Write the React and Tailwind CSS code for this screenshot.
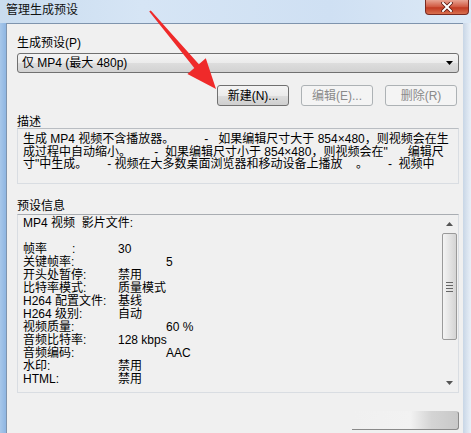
import React from 'react';

const font = { fontFamily: '"Liberation Sans", "Noto Sans CJK SC", sans-serif' };

const infoRows = [
  { label: '关键帧率:', value: '5', indent: true },
  { label: '开头处暂停:', value: '禁用' },
  { label: '比特率模式:', value: '质量模式' },
  { label: 'H264 配置文件:', value: '基线' },
  { label: 'H264 级别:', value: '自动' },
  { label: '视频质量:', value: '60 %', indent: true },
  { label: '音频比特率:', value: '128 kbps' },
  { label: '音频编码:', value: 'AAC', indent: true },
  { label: '水印:', value: '禁用' },
  { label: 'HTML:', value: '禁用' },
];

const Button = ({ children, disabled }) => (
  <div
    className={
      'w-[72px] h-[21px] rounded-[3px] border flex items-center justify-center text-[12px] ' +
      (disabled
        ? 'border-[#adb2b5] bg-[#f4f4f4] text-[#8a8a8a]'
        : 'border-[#707070] bg-[linear-gradient(#f4f4f4,#ebebeb_50%,#dddddd_51%,#cfcfcf)] text-black')
    }
  >
    {children}
  </div>
);

const Arrow = () => (
  <svg className="absolute left-0 top-0 pointer-events-none" width="471" height="433">
    <polygon
      points="150.8,10.4 198.9,64.2 205.8,58.3 216,89 187.4,73.9 194.3,68 149.2,11.6"
      fill="#ef2a2a"
    />
  </svg>
);

export default function App() {
  return (
    <div
      className="relative w-[471px] h-[433px] overflow-hidden flex flex-col bg-[linear-gradient(90deg,#c9dcef,#d6e5f5_30%,#cfe0f3_70%,#dce9f6)] text-black"
      style={font}
    >
      {/* title bar */}
      <div className="h-[23px] flex items-start justify-between shrink-0">
        <div className="pl-[6px] pt-[3px] text-[12px] leading-[14px] text-[#111]">管理生成预设</div>
        <div className="mr-[2px] w-[44px] h-[15px] rounded-b-[4px] border border-t-0 border-[#7a2a20] bg-[linear-gradient(#e8a493,#d0573f_50%,#c13a22_55%,#d8704f)] flex items-center justify-center">
          <svg width="12" height="10" viewBox="0 0 12 10">
            <path d="M2 1 L10 9 M10 1 L2 9" stroke="#5a1a10" strokeWidth="3.6" strokeLinecap="square" />
            <path d="M2 1 L10 9 M10 1 L2 9" stroke="#ffffff" strokeWidth="2" strokeLinecap="square" />
          </svg>
        </div>
      </div>

      {/* frame + client */}
      <div className="flex flex-1 min-h-0">
        <div className="w-[6px] bg-[linear-gradient(90deg,#a7c7ea,#8fb6e2)] shrink-0" />
        <div className="flex-1 min-w-0 bg-[#f0f0f0] border-l border-t border-[#7f94ad] pl-[10px] pr-[3px] pt-[12px] text-[12px]">
          <div className="leading-[14px]">生成预设(P)</div>

          <div className="mt-[3px] h-[20px] w-[442px] rounded-[3px] border border-[#707070] bg-[linear-gradient(#f4f4f4,#ebebeb_50%,#dddddd_51%,#d2d2d2)] flex items-center justify-between pl-[4px] pr-[5px]">
            <span>仅 MP4 (最大 480p)</span>
            <svg width="7" height="4" viewBox="0 0 7 4">
              <path d="M0 0 H7 L3.5 4 Z" fill="#000" />
            </svg>
          </div>

          <div className="mt-[12px] w-[442px] flex justify-end gap-[12px] pr-[2px]">
            <Button>新建(N)...</Button>
            <Button disabled>编辑(E)...</Button>
            <Button disabled>删除(R)</Button>
          </div>

          <div className="mt-[10px] leading-[12px]">描述</div>
          <div className="h-[56px] w-[442px] border border-[#d9dde2] border-t-[#b9bdc2] bg-[#f0f0f0] pl-[5px] pt-[4px] leading-[12.5px] whitespace-pre overflow-hidden">
            <div>生成 MP4 视频不含播放器。         -   如果编辑尺寸大于 854×480，则视频会在生</div>
            <div>成过程中自动缩小。       -  如果编辑尺寸小于 854×480，则视频会在"      编辑尺</div>
            <div>寸"中生成。      - 视频在大多数桌面浏览器和移动设备上播放    。      -  视频中</div>
          </div>

          <div className="mt-[16px] leading-[12px]">预设信息</div>
          <div className="mt-[2px] h-[179px] w-[442px] border border-[#d9dde2] border-t-[#a9adb2] bg-[#f0f0f0] flex">
            <div className="flex-1 pl-[5px] pt-[2px] leading-[13px] whitespace-pre overflow-hidden">
              <div>MP4 视频  影片文件:</div>
              <div className="h-[13px]" />
              <div className="flex">
                <span className="inline-block w-[49px]">帧率</span>
                <span className="inline-block w-[46px]">:</span>
                <span>30</span>
              </div>
              {infoRows.map((r) => (
                <div key={r.label} className="flex">
                  <span className="inline-block w-[95px] shrink-0">{r.label}</span>
                  <span className={r.indent ? 'pl-[48px]' : ''}>{r.value}</span>
                </div>
              ))}
            </div>
            {/* scrollbar */}
            <div className="w-[17px] flex flex-col items-center bg-[#f0f0f0]">
              <div className="h-[18px] flex items-center">
                <svg width="7" height="4" viewBox="0 0 7 4">
                  <path d="M0 4 H7 L3.5 0 Z" fill="#555" />
                </svg>
              </div>
              <div className="w-[15px] h-[107px] rounded-[2px] border border-[#9a9a9a] bg-[linear-gradient(90deg,#f4f4f4,#e4e4e4_50%,#d4d4d4)] flex items-center justify-center">
                <div className="flex flex-col gap-[2px]">
                  <div className="w-[7px] h-px bg-[#666]" />
                  <div className="w-[7px] h-px bg-[#666]" />
                  <div className="w-[7px] h-px bg-[#666]" />
                  <div className="w-[7px] h-px bg-[#666]" />
                </div>
              </div>
              <div className="flex-1" />
              <div className="h-[18px] flex items-center">
                <svg width="7" height="4" viewBox="0 0 7 4">
                  <path d="M0 0 H7 L3.5 4 Z" fill="#555" />
                </svg>
              </div>
            </div>
          </div>

          <div className="mt-[18px] w-[442px] flex justify-end">
            <div className="w-[107px] h-[19px] rounded-r-[3px] border-r border-y border-[#8a8a8a] border-t-transparent bg-[linear-gradient(90deg,#f0f0f0,#f2f2f2_55%,#d4d4d4_75%,#c8c8c8)]" />
          </div>
        </div>
        <div className="w-[8px] bg-[linear-gradient(90deg,#c8d6e6,#e9f0f8)] shrink-0" />
      </div>

      <Arrow />
    </div>
  );
}
